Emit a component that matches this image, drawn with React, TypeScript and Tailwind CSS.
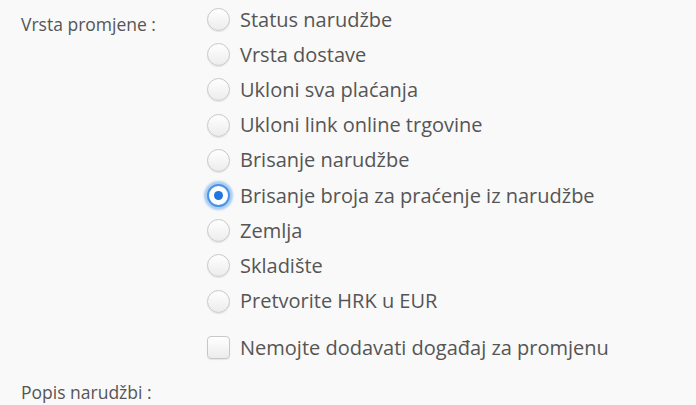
import { useState } from "react";

const options = [
  "Status narudžbe",
  "Vrsta dostave",
  "Ukloni sva plaćanja",
  "Ukloni link online trgovine",
  "Brisanje narudžbe",
  "Brisanje broja za praćenje iz narudžbe",
  "Zemlja",
  "Skladište",
  "Pretvorite HRK u EUR",
];

function Radio({ checked }: { checked: boolean }) {
  if (checked) {
    return (
      <span className="flex h-[23px] w-[23px] shrink-0 items-center justify-center rounded-full border-2 border-[#4a95e6] bg-white shadow-[0_0_2px_3px_rgba(110,170,235,0.55)]">
        <span className="h-[9px] w-[9px] rounded-full bg-[#1f78e0]" />
      </span>
    );
  }
  return (
    <span className="h-[23px] w-[23px] shrink-0 rounded-full border border-[#c8c8c8] bg-gradient-to-b from-white to-[#ececec] shadow-[0_1px_1px_rgba(0,0,0,0.08)]" />
  );
}

export default function App() {
  const [selected, setSelected] = useState(5);
  const [noEvent, setNoEvent] = useState(false);

  return (
    <div className="h-[405px] w-[696px] overflow-hidden bg-[#f9f9f9] font-['Open_Sans',sans-serif] text-[#555]">
      <div className="flex pt-[2px]">
        <div className="w-[207px] shrink-0 pl-[21px] pt-[9px] text-[17.5px]">Vrsta promjene :</div>
        <div className="flex flex-col">
          {options.map((label, i) => (
            <label
              key={label}
              className="flex h-[35.2px] cursor-pointer items-center gap-[10px] text-[20px]"
              onClick={() => setSelected(i)}
            >
              <Radio checked={selected === i} />
              <span className="leading-none">{label}</span>
            </label>
          ))}
          <label
            className="mt-[11px] flex h-[36px] cursor-pointer items-center gap-[10px] text-[20px]"
            onClick={() => setNoEvent(!noEvent)}
          >
            <span className="flex h-[23px] w-[23px] shrink-0 items-center justify-center rounded-[4px] border border-[#c8c8c8] bg-gradient-to-b from-white to-[#ececec] shadow-[0_1px_1px_rgba(0,0,0,0.08)] text-[14px] text-[#1f78e0]">
              {noEvent ? "✓" : ""}
            </span>
            <span className="leading-none">Nemojte dodavati događaj za promjenu</span>
          </label>
        </div>
      </div>
      <div className="pl-[21px] pt-[13px] text-[17.5px]">Popis narudžbi :</div>
    </div>
  );
}
